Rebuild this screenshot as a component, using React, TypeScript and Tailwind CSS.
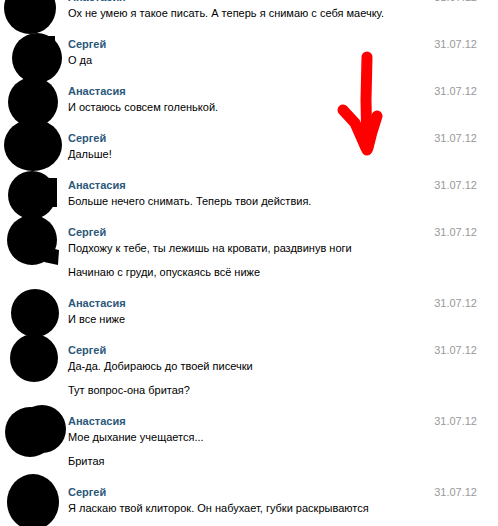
import React from "react"

type Msg = { name: string; lines: string[] }

const messages: Msg[] = [
  { name: "Анастасия", lines: ["Ох не умею я такое писать. А теперь я снимаю с себя маечку."] },
  { name: "Сергей", lines: ["О да"] },
  { name: "Анастасия", lines: ["И остаюсь совсем голенькой."] },
  { name: "Сергей", lines: ["Дальше!"] },
  { name: "Анастасия", lines: ["Больше нечего снимать. Теперь твои действия."] },
  { name: "Сергей", lines: ["Подхожу к тебе, ты лежишь на кровати, раздвинув ноги", "Начинаю с груди, опускаясь всё ниже"] },
  { name: "Анастасия", lines: ["И все ниже"] },
  { name: "Сергей", lines: ["Да-да. Добираюсь до твоей писечки", "Тут вопрос-она бритая?"] },
  { name: "Анастасия", lines: ["Мое дыхание учещается...", "Бритая"] },
  { name: "Сергей", lines: ["Я ласкаю твой клиторок. Он набухает, губки раскрываются"] },
]

function Blobs() {
  // censor marks drawn over the avatars + red arrow
  return (
    <svg className="absolute left-0 top-0 pointer-events-none" width="498" height="526" viewBox="0 0 498 526">
      <g fill="#000">
        <circle cx="30" cy="8" r="26" />
        <circle cx="37" cy="58" r="25" />
        <rect x="48" y="36" width="7" height="8" />
        <circle cx="33" cy="102" r="25" />
        <ellipse cx="33" cy="145" rx="29" ry="26" />
        <circle cx="32" cy="195" r="24" />
        <rect x="44" y="178" width="13" height="29" />
        <circle cx="32" cy="240" r="25" />
        <path d="M50 248 L59 250 L58 265 L44 262 Z" />
        <circle cx="35" cy="313" r="24" />
        <circle cx="34" cy="358" r="24" />
        <circle cx="30" cy="432" r="25" />
        <circle cx="42" cy="429" r="24" />
        <ellipse cx="33" cy="502" rx="26" ry="28" />
      </g>
      <g stroke="#ff0000" strokeWidth="11" strokeLinecap="round" strokeLinejoin="round" fill="none">
        <path d="M367 57 L366 100 L367 150" />
        <path d="M343 110 L355 123 L366 148" />
        <path d="M377 116 L372 132 L368 148" />
      </g>
    </svg>
  )
}

export default function App() {
  return (
    <div className="relative w-[498px] h-[526px] overflow-hidden bg-white font-['Liberation_Sans',Arial,sans-serif] text-[11px] leading-[16px] text-black">
      <div className="mt-[-11px] flex flex-col">
        {messages.map((m, i) => (
          <div key={i} className="flex pb-[15px] pl-[68px] pr-[21px]">
            <div className="flex-1">
              <div className="flex items-center justify-between">
                <span className="font-bold text-[#2b587a]">{m.name}</span>
                <span className="text-[#999999]">31.07.12</span>
              </div>
              {m.lines.map((l, j) => (
                <div key={j} className={j > 0 ? "mt-2" : ""}>
                  {l}
                </div>
              ))}
            </div>
          </div>
        ))}
      </div>
      <Blobs />
    </div>
  )
}
